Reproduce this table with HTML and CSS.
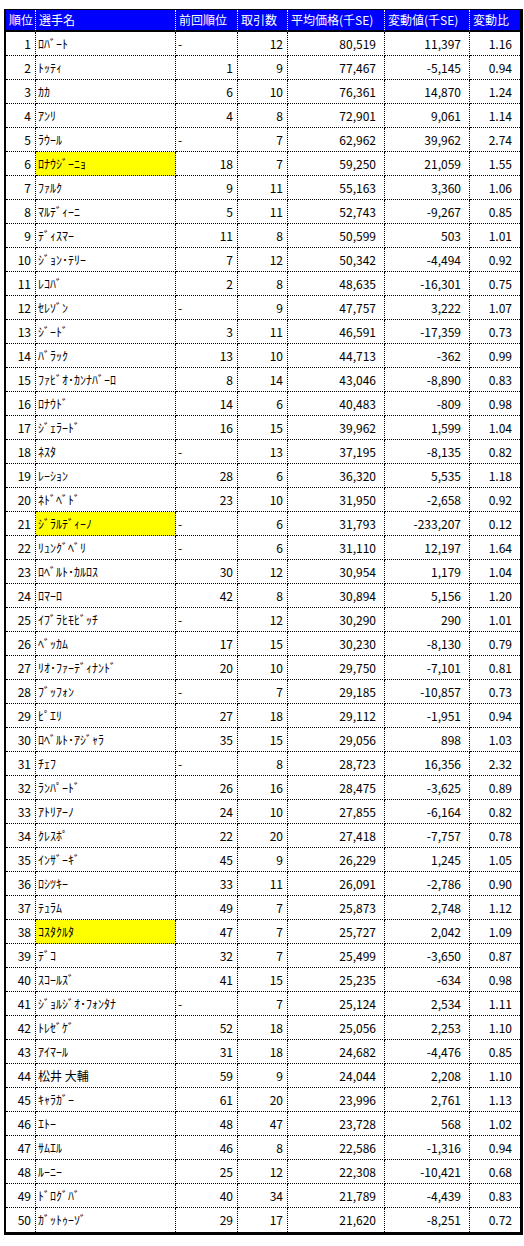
FILE: index.html
```html
<!DOCTYPE html>
<html lang="ja">
<head>
<meta charset="utf-8">
<title>選手ランキング</title>
<link rel="stylesheet" href="styles.css">
</head>
<body>
<div class="sheet">
<table class="rank">
<colgroup>
<col class="c-no"><col class="c-name"><col class="c-prev"><col class="c-deal"><col class="c-avg"><col class="c-diff"><col class="c-ratio">
</colgroup>
<thead>
<tr><th>順位</th><th>選手名</th><th>前回順位</th><th>取引数</th><th>平均価格(千SE)</th><th>変動値(千SE)</th><th>変動比</th></tr>
</thead>
<tbody>
<tr><td class="num">1</td><td class="name">ﾛﾊﾞｰﾄ</td><td class="txt">-</td><td class="num">12</td><td class="amt">80,519</td><td class="amt">11,397</td><td class="amt">1.16</td></tr>
<tr><td class="num">2</td><td class="name">ﾄｯﾃｨ</td><td class="num">1</td><td class="num">9</td><td class="amt">77,467</td><td class="amt">-5,145</td><td class="amt">0.94</td></tr>
<tr><td class="num">3</td><td class="name">ｶｶ</td><td class="num">6</td><td class="num">10</td><td class="amt">76,361</td><td class="amt">14,870</td><td class="amt">1.24</td></tr>
<tr><td class="num">4</td><td class="name">ｱﾝﾘ</td><td class="num">4</td><td class="num">8</td><td class="amt">72,901</td><td class="amt">9,061</td><td class="amt">1.14</td></tr>
<tr><td class="num">5</td><td class="name">ﾗｳｰﾙ</td><td class="txt">-</td><td class="num">7</td><td class="amt">62,962</td><td class="amt">39,962</td><td class="amt">2.74</td></tr>
<tr><td class="num">6</td><td class="name hl">ﾛﾅｳｼﾞｰﾆｮ</td><td class="num">18</td><td class="num">7</td><td class="amt">59,250</td><td class="amt">21,059</td><td class="amt">1.55</td></tr>
<tr><td class="num">7</td><td class="name">ﾌｧﾙｸ</td><td class="num">9</td><td class="num">11</td><td class="amt">55,163</td><td class="amt">3,360</td><td class="amt">1.06</td></tr>
<tr><td class="num">8</td><td class="name">ﾏﾙﾃﾞｨｰﾆ</td><td class="num">5</td><td class="num">11</td><td class="amt">52,743</td><td class="amt">-9,267</td><td class="amt">0.85</td></tr>
<tr><td class="num">9</td><td class="name">ﾃﾞｨｽﾏｰ</td><td class="num">11</td><td class="num">8</td><td class="amt">50,599</td><td class="amt">503</td><td class="amt">1.01</td></tr>
<tr><td class="num">10</td><td class="name">ｼﾞｮﾝ･ﾃﾘｰ</td><td class="num">7</td><td class="num">12</td><td class="amt">50,342</td><td class="amt">-4,494</td><td class="amt">0.92</td></tr>
<tr><td class="num">11</td><td class="name">ﾚｺﾊﾞ</td><td class="num">2</td><td class="num">8</td><td class="amt">48,635</td><td class="amt">-16,301</td><td class="amt">0.75</td></tr>
<tr><td class="num">12</td><td class="name">ｾﾚｿﾞﾝ</td><td class="txt">-</td><td class="num">9</td><td class="amt">47,757</td><td class="amt">3,222</td><td class="amt">1.07</td></tr>
<tr><td class="num">13</td><td class="name">ｼﾞｰﾄﾞ</td><td class="num">3</td><td class="num">11</td><td class="amt">46,591</td><td class="amt">-17,359</td><td class="amt">0.73</td></tr>
<tr><td class="num">14</td><td class="name">ﾊﾞﾗｯｸ</td><td class="num">13</td><td class="num">10</td><td class="amt">44,713</td><td class="amt">-362</td><td class="amt">0.99</td></tr>
<tr><td class="num">15</td><td class="name">ﾌｧﾋﾞｵ･ｶﾝﾅﾊﾞｰﾛ</td><td class="num">8</td><td class="num">14</td><td class="amt">43,046</td><td class="amt">-8,890</td><td class="amt">0.83</td></tr>
<tr><td class="num">16</td><td class="name">ﾛﾅｳﾄﾞ</td><td class="num">14</td><td class="num">6</td><td class="amt">40,483</td><td class="amt">-809</td><td class="amt">0.98</td></tr>
<tr><td class="num">17</td><td class="name">ｼﾞｪﾗｰﾄﾞ</td><td class="num">16</td><td class="num">15</td><td class="amt">39,962</td><td class="amt">1,599</td><td class="amt">1.04</td></tr>
<tr><td class="num">18</td><td class="name">ﾈｽﾀ</td><td class="txt">-</td><td class="num">13</td><td class="amt">37,195</td><td class="amt">-8,135</td><td class="amt">0.82</td></tr>
<tr><td class="num">19</td><td class="name">ﾚｰｼｮﾝ</td><td class="num">28</td><td class="num">6</td><td class="amt">36,320</td><td class="amt">5,535</td><td class="amt">1.18</td></tr>
<tr><td class="num">20</td><td class="name">ﾈﾄﾞﾍﾞﾄﾞ</td><td class="num">23</td><td class="num">10</td><td class="amt">31,950</td><td class="amt">-2,658</td><td class="amt">0.92</td></tr>
<tr><td class="num">21</td><td class="name hl">ｼﾞﾗﾙﾃﾞｨｰﾉ</td><td class="txt">-</td><td class="num">6</td><td class="amt">31,793</td><td class="amt">-233,207</td><td class="amt">0.12</td></tr>
<tr><td class="num">22</td><td class="name">ﾘｭﾝｸﾞﾍﾞﾘ</td><td class="txt">-</td><td class="num">6</td><td class="amt">31,110</td><td class="amt">12,197</td><td class="amt">1.64</td></tr>
<tr><td class="num">23</td><td class="name">ﾛﾍﾞﾙﾄ･ｶﾙﾛｽ</td><td class="num">30</td><td class="num">12</td><td class="amt">30,954</td><td class="amt">1,179</td><td class="amt">1.04</td></tr>
<tr><td class="num">24</td><td class="name">ﾛﾏｰﾛ</td><td class="num">42</td><td class="num">8</td><td class="amt">30,894</td><td class="amt">5,156</td><td class="amt">1.20</td></tr>
<tr><td class="num">25</td><td class="name">ｲﾌﾞﾗﾋﾓﾋﾞｯﾁ</td><td class="txt">-</td><td class="num">12</td><td class="amt">30,290</td><td class="amt">290</td><td class="amt">1.01</td></tr>
<tr><td class="num">26</td><td class="name">ﾍﾞｯｶﾑ</td><td class="num">17</td><td class="num">15</td><td class="amt">30,230</td><td class="amt">-8,130</td><td class="amt">0.79</td></tr>
<tr><td class="num">27</td><td class="name">ﾘｵ･ﾌｧｰﾃﾞｨﾅﾝﾄﾞ</td><td class="num">20</td><td class="num">10</td><td class="amt">29,750</td><td class="amt">-7,101</td><td class="amt">0.81</td></tr>
<tr><td class="num">28</td><td class="name">ﾌﾞｯﾌｫﾝ</td><td class="txt">-</td><td class="num">7</td><td class="amt">29,185</td><td class="amt">-10,857</td><td class="amt">0.73</td></tr>
<tr><td class="num">29</td><td class="name">ﾋﾟｴﾘ</td><td class="num">27</td><td class="num">18</td><td class="amt">29,112</td><td class="amt">-1,951</td><td class="amt">0.94</td></tr>
<tr><td class="num">30</td><td class="name">ﾛﾍﾞﾙﾄ･ｱｼﾞｬﾗ</td><td class="num">35</td><td class="num">15</td><td class="amt">29,056</td><td class="amt">898</td><td class="amt">1.03</td></tr>
<tr><td class="num">31</td><td class="name">ﾁｪﾌ</td><td class="txt">-</td><td class="num">8</td><td class="amt">28,723</td><td class="amt">16,356</td><td class="amt">2.32</td></tr>
<tr><td class="num">32</td><td class="name">ﾗﾝﾊﾟｰﾄﾞ</td><td class="num">26</td><td class="num">16</td><td class="amt">28,475</td><td class="amt">-3,625</td><td class="amt">0.89</td></tr>
<tr><td class="num">33</td><td class="name">ｱﾄﾘｱｰﾉ</td><td class="num">24</td><td class="num">10</td><td class="amt">27,855</td><td class="amt">-6,164</td><td class="amt">0.82</td></tr>
<tr><td class="num">34</td><td class="name">ｸﾚｽﾎﾟ</td><td class="num">22</td><td class="num">20</td><td class="amt">27,418</td><td class="amt">-7,757</td><td class="amt">0.78</td></tr>
<tr><td class="num">35</td><td class="name">ｲﾝｻﾞｰｷﾞ</td><td class="num">45</td><td class="num">9</td><td class="amt">26,229</td><td class="amt">1,245</td><td class="amt">1.05</td></tr>
<tr><td class="num">36</td><td class="name">ﾛｼﾂｷｰ</td><td class="num">33</td><td class="num">11</td><td class="amt">26,091</td><td class="amt">-2,786</td><td class="amt">0.90</td></tr>
<tr><td class="num">37</td><td class="name">ﾃｭﾗﾑ</td><td class="num">49</td><td class="num">7</td><td class="amt">25,873</td><td class="amt">2,748</td><td class="amt">1.12</td></tr>
<tr><td class="num">38</td><td class="name hl">ｺｽﾀｸﾙﾀ</td><td class="num">47</td><td class="num">7</td><td class="amt">25,727</td><td class="amt">2,042</td><td class="amt">1.09</td></tr>
<tr><td class="num">39</td><td class="name">ﾃﾞｺ</td><td class="num">32</td><td class="num">7</td><td class="amt">25,499</td><td class="amt">-3,650</td><td class="amt">0.87</td></tr>
<tr><td class="num">40</td><td class="name">ｽｺｰﾙｽﾞ</td><td class="num">41</td><td class="num">15</td><td class="amt">25,235</td><td class="amt">-634</td><td class="amt">0.98</td></tr>
<tr><td class="num">41</td><td class="name">ｼﾞｮﾙｼﾞｵ･ﾌｫﾝﾀﾅ</td><td class="txt">-</td><td class="num">7</td><td class="amt">25,124</td><td class="amt">2,534</td><td class="amt">1.11</td></tr>
<tr><td class="num">42</td><td class="name">ﾄﾚｾﾞｹﾞ</td><td class="num">52</td><td class="num">18</td><td class="amt">25,056</td><td class="amt">2,253</td><td class="amt">1.10</td></tr>
<tr><td class="num">43</td><td class="name">ｱｲﾏｰﾙ</td><td class="num">31</td><td class="num">18</td><td class="amt">24,682</td><td class="amt">-4,476</td><td class="amt">0.85</td></tr>
<tr><td class="num">44</td><td class="name">松井 大輔</td><td class="num">59</td><td class="num">9</td><td class="amt">24,044</td><td class="amt">2,208</td><td class="amt">1.10</td></tr>
<tr><td class="num">45</td><td class="name">ｷｬﾗｶﾞｰ</td><td class="num">61</td><td class="num">20</td><td class="amt">23,996</td><td class="amt">2,761</td><td class="amt">1.13</td></tr>
<tr><td class="num">46</td><td class="name">ｴﾄｰ</td><td class="num">48</td><td class="num">47</td><td class="amt">23,728</td><td class="amt">568</td><td class="amt">1.02</td></tr>
<tr><td class="num">47</td><td class="name">ｻﾑｴﾙ</td><td class="num">46</td><td class="num">8</td><td class="amt">22,586</td><td class="amt">-1,316</td><td class="amt">0.94</td></tr>
<tr><td class="num">48</td><td class="name">ﾙｰﾆｰ</td><td class="num">25</td><td class="num">12</td><td class="amt">22,308</td><td class="amt">-10,421</td><td class="amt">0.68</td></tr>
<tr><td class="num">49</td><td class="name">ﾄﾞﾛｸﾞﾊﾞ</td><td class="num">40</td><td class="num">34</td><td class="amt">21,789</td><td class="amt">-4,439</td><td class="amt">0.83</td></tr>
<tr><td class="num">50</td><td class="name">ｶﾞｯﾄｩｰｿﾞ</td><td class="num">29</td><td class="num">17</td><td class="amt">21,620</td><td class="amt">-8,251</td><td class="amt">0.72</td></tr>
</tbody>
</table>
</div>
</body>
</html>
```
FILE: styles.css
```css
html, body {
  margin: 0;
  padding: 0;
  background: #ffffff;
}

body {
  font-family: "Noto Sans CJK JP", "Noto Sans", sans-serif;
  font-size: 12px;
  color: #000000;
}

.sheet {
  padding: 9px 0 0 4px;
}

.rank {
  border-collapse: separate;
  border-spacing: 0;
  table-layout: fixed;
  width: 519px;
  border-style: solid;
  border-color: #000000;
  border-width: 1px 3px 3px 2px;
}

.c-no { width: 30px; }
.c-name { width: 140px; }
.c-prev { width: 62px; }
.c-deal { width: 50px; }
.c-avg { width: 97px; }
.c-diff { width: 85px; }
.c-ratio { width: 50px; }

.rank th,
.rank td {
  padding: 0;
  white-space: nowrap;
  overflow: hidden;
  line-height: 14px;
  vertical-align: middle;
}

.rank thead tr {
  height: 22px;
}

.rank th {
  background: #0000ff;
  color: #ffffff;
  font-weight: normal;
  text-align: left;
  padding-left: 3px;
  border-right: 1px dotted #ffffff;
  border-bottom: 2px solid #000000;
}

.rank tbody tr {
  height: 24px;
}

.rank td {
  border-right: 1px dotted #000000;
  border-bottom: 1px dotted #000000;
}

.rank th:last-child,
.rank td:last-child {
  border-right: none;
}

.rank tbody tr:last-child td {
  border-bottom: none;
}

.num {
  text-align: right;
  padding-right: 4px !important;
}

.amt {
  text-align: right;
  padding-right: 8px !important;
}

.txt {
  text-align: left;
  padding-left: 2px !important;
}

.name {
  text-align: left;
  padding-left: 2px !important;
}

.hl {
  background: #ffff00;
}
```
